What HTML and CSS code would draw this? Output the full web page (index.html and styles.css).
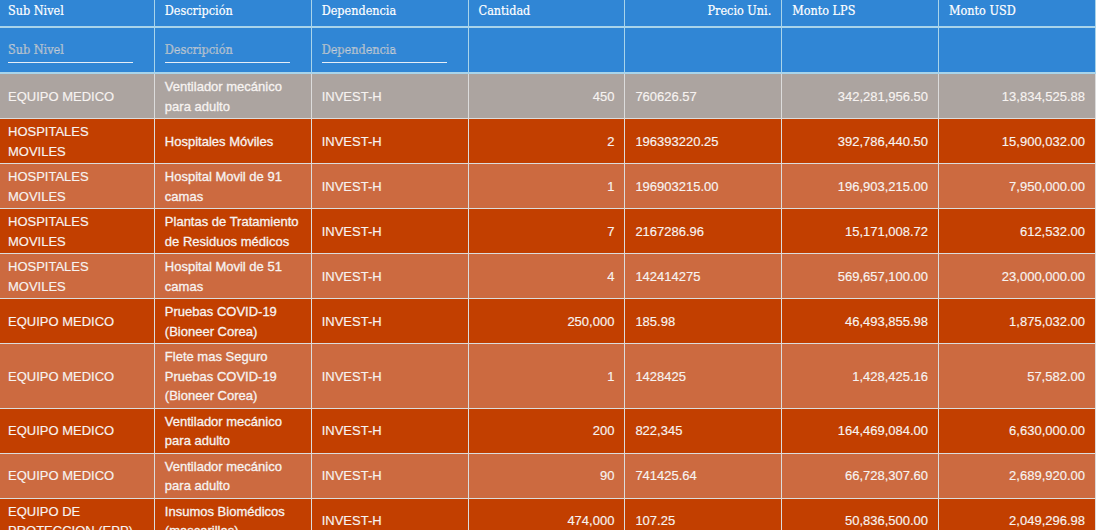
FILE: index.html
```html
<!DOCTYPE html>
<html lang="es">
<head>
<meta charset="utf-8">
<title>Tabla</title>
<link rel="stylesheet" href="styles.css">
</head>
<body>
<table class="grid">
  <colgroup>
    <col><col><col><col><col><col><col>
  </colgroup>
  <thead>
    <tr class="head">
      <th>Sub Nivel</th>
      <th>Descripción</th>
      <th>Dependencia</th>
      <th>Cantidad</th>
      <th class="num">Precio Uni.</th>
      <th>Monto LPS</th>
      <th>Monto USD</th>
    </tr>
    <tr class="filter">
      <th><input class="fin" placeholder="Sub Nivel"></th>
      <th><input class="fin" placeholder="Descripción"></th>
      <th><input class="fin" placeholder="Dependencia"></th>
      <th></th>
      <th></th>
      <th></th>
      <th></th>
    </tr>
  </thead>
  <tbody>
    <tr class="gray">
      <td>EQUIPO MEDICO</td><td class="desc">Ventilador mecánico para adulto</td><td>INVEST-H</td><td class="num">450</td><td>760626.57</td><td class="num">342,281,956.50</td><td class="num">13,834,525.88</td>
    </tr>
    <tr class="dark">
      <td>HOSPITALES MOVILES</td><td class="desc">Hospitales Móviles</td><td>INVEST-H</td><td class="num">2</td><td>196393220.25</td><td class="num">392,786,440.50</td><td class="num">15,900,032.00</td>
    </tr>
    <tr class="light">
      <td>HOSPITALES MOVILES</td><td class="desc">Hospital Movil de 91 camas</td><td>INVEST-H</td><td class="num">1</td><td>196903215.00</td><td class="num">196,903,215.00</td><td class="num">7,950,000.00</td>
    </tr>
    <tr class="dark">
      <td>HOSPITALES MOVILES</td><td class="desc">Plantas de Tratamiento de Residuos médicos</td><td>INVEST-H</td><td class="num">7</td><td>2167286.96</td><td class="num">15,171,008.72</td><td class="num">612,532.00</td>
    </tr>
    <tr class="light">
      <td>HOSPITALES MOVILES</td><td class="desc">Hospital Movil de 51 camas</td><td>INVEST-H</td><td class="num">4</td><td>142414275</td><td class="num">569,657,100.00</td><td class="num">23,000,000.00</td>
    </tr>
    <tr class="dark">
      <td>EQUIPO MEDICO</td><td class="desc">Pruebas COVID-19 (Bioneer Corea)</td><td>INVEST-H</td><td class="num">250,000</td><td>185.98</td><td class="num">46,493,855.98</td><td class="num">1,875,032.00</td>
    </tr>
    <tr class="light">
      <td>EQUIPO MEDICO</td><td class="desc">Flete mas Seguro Pruebas COVID-19 (Bioneer Corea)</td><td>INVEST-H</td><td class="num">1</td><td>1428425</td><td class="num">1,428,425.16</td><td class="num">57,582.00</td>
    </tr>
    <tr class="dark">
      <td>EQUIPO MEDICO</td><td class="desc">Ventilador mecánico para adulto</td><td>INVEST-H</td><td class="num">200</td><td>822,345</td><td class="num">164,469,084.00</td><td class="num">6,630,000.00</td>
    </tr>
    <tr class="light">
      <td>EQUIPO MEDICO</td><td class="desc">Ventilador mecánico para adulto</td><td>INVEST-H</td><td class="num">90</td><td>741425.64</td><td class="num">66,728,307.60</td><td class="num">2,689,920.00</td>
    </tr>
    <tr class="dark">
      <td>EQUIPO DE PROTECCION (EPP)</td><td class="desc">Insumos Biomédicos (mascarillas)</td><td>INVEST-H</td><td class="num">474,000</td><td>107.25</td><td class="num">50,836,500.00</td><td class="num">2,049,296.98</td>
    </tr>
  </tbody>
</table>
</body>
</html>
```

FILE: styles.css
```css
html, body {
  margin: 0;
  padding: 0;
  background: #ffffff;
  overflow: hidden;
}

.grid {
  table-layout: fixed;
  border-collapse: collapse;
  width: 1099px;
  margin-left: -3px;
  font-family: "Liberation Sans", Arial, sans-serif;
  font-size: 13px;
  line-height: 19.5px;
  color: #f7f3f1;
}

.grid th,
.grid td {
  padding: 3px 10px 2px 10px;
  text-align: left;
  vertical-align: middle;
  overflow: hidden;
}

.grid thead th {
  background: #3086d5;
  color: #ffffff;
  font-family: "DejaVu Serif Condensed", "DejaVu Serif", serif;
  font-weight: normal;
  font-size: 12.5px;
  -webkit-text-stroke: 0.2px #ffffff;
  border-left: 1px solid #a9d4ea;
  border-right: 1px solid #a9d4ea;
}

.head th {
  height: 21px;
  padding-top: 0;
  padding-bottom: 5px;
  border-bottom: 2px solid #a9d4ea;
}

.filter th {
  height: 44px;
  padding-top: 0;
  padding-bottom: 0;
  vertical-align: top;
  border-bottom: 2px solid #a9d4ea;
}

.grid th.num,
.grid td.num {
  text-align: right;
}

.fin {
  display: block;
  width: 125px;
  box-sizing: border-box;
  margin: 13px 0 0 0;
  padding: 0 0 5px 0;
  line-height: 16px;
  height: 22px;
  border: none;
  border-bottom: 1px solid #e6eef7;
  background: transparent;
  font-family: "DejaVu Serif Condensed", "DejaVu Serif", serif;
  font-size: 12.5px;
  color: #ffffff;
  outline: none;
}

.fin::placeholder {
  color: #93a3b4;
}

.grid td {
  height: 39px;
  border: 1px solid #dcdcdc;
  -webkit-text-stroke: 0.15px #f7f3f1;
}

.grid td.desc {
  -webkit-text-stroke: 0.3px #f7f3f1;
}

.gray td { background: #aca4a0; }
.dark td { background: #c23f00; }
.light td { background: #cc6a40; }
```
